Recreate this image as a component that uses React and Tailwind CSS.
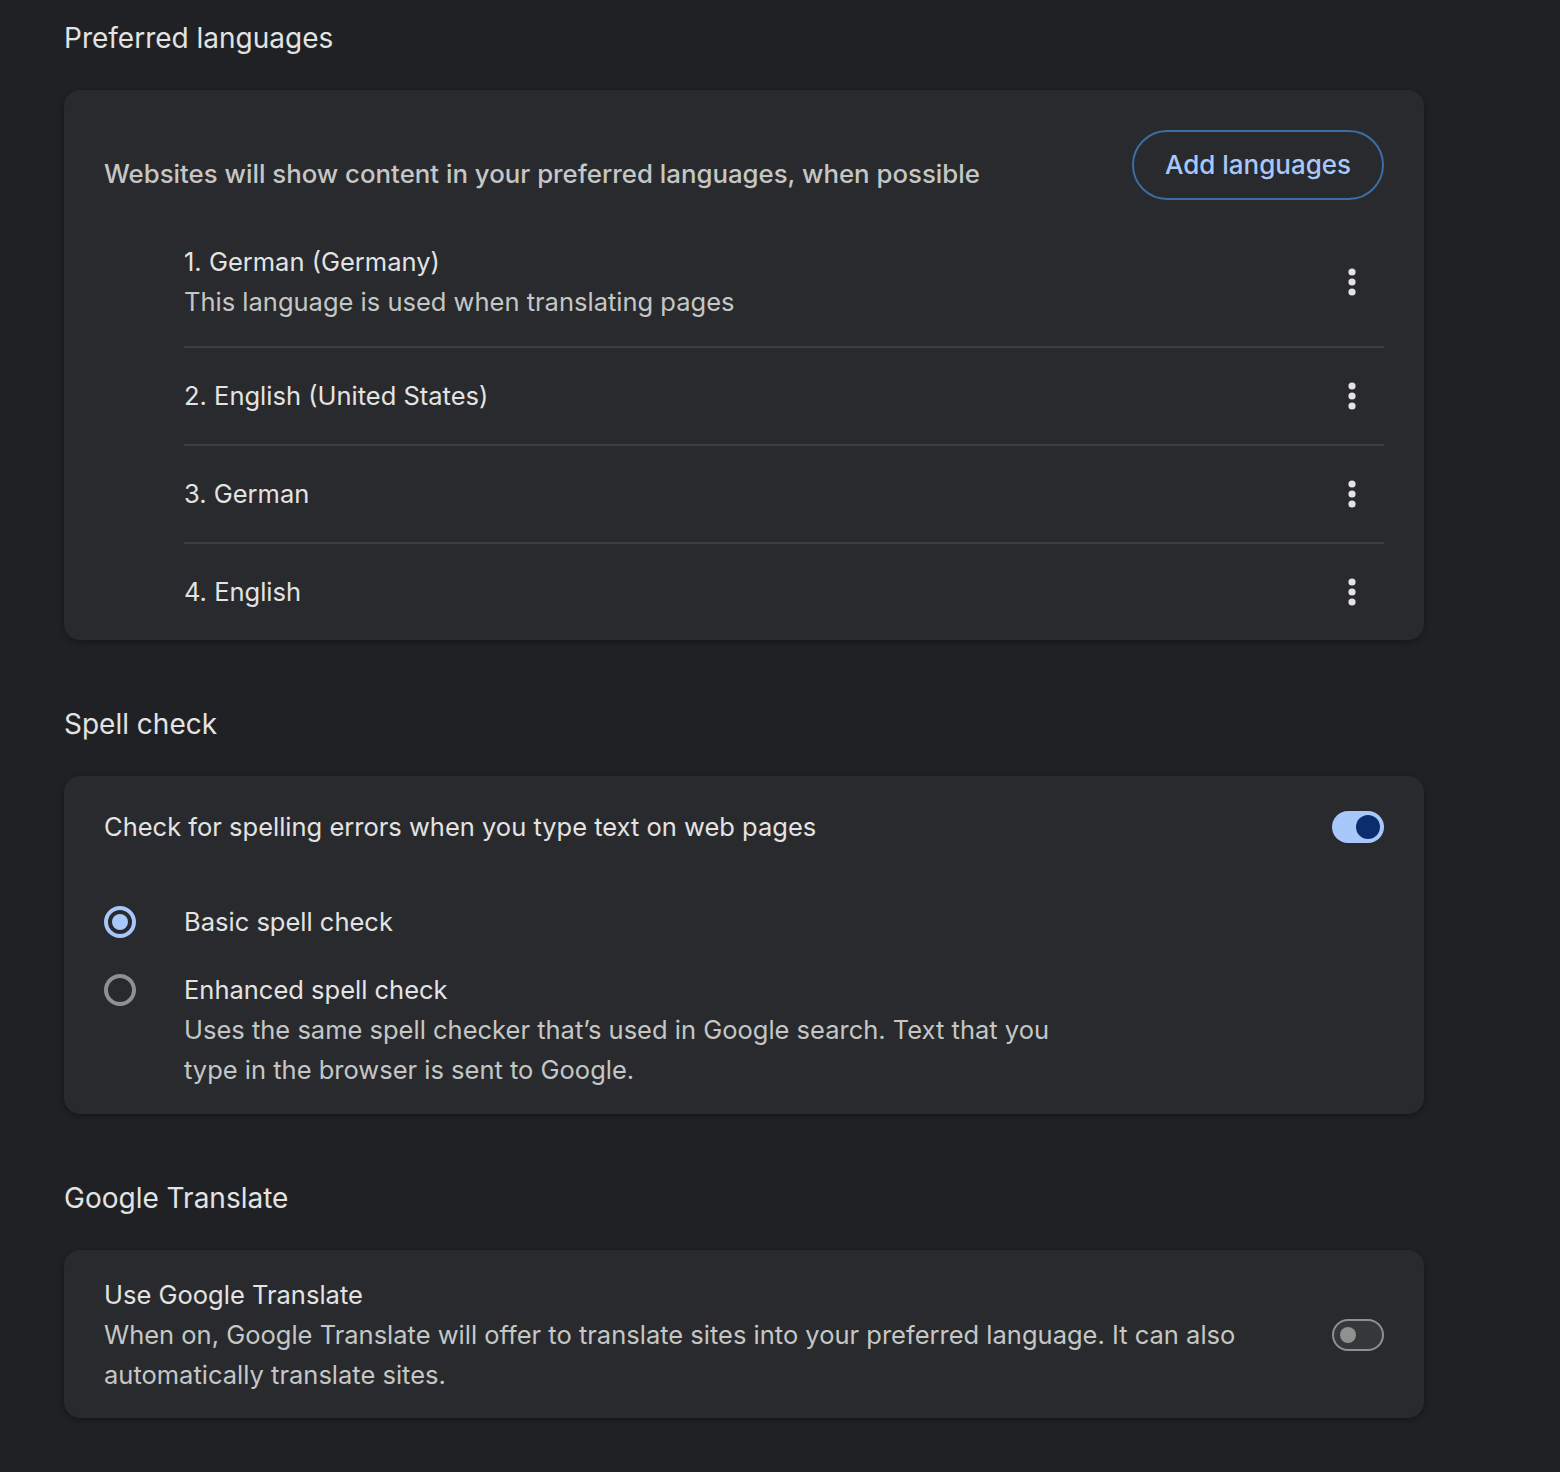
import React, { useState } from "react";

const languages = [
  { name: "1. German (Germany)", note: "This language is used when translating pages" },
  { name: "2. English (United States)" },
  { name: "3. German" },
  { name: "4. English" },
];

const MoreIcon = () => (
  <svg width="8" height="28" viewBox="0 0 8 28" className="fill-[#e3e3e3]">
    <circle cx="4" cy="4" r="3.6" />
    <circle cx="4" cy="14" r="3.6" />
    <circle cx="4" cy="24" r="3.6" />
  </svg>
);

const Toggle = ({ on, onClick }) =>
  on ? (
    <button
      onClick={onClick}
      className="relative flex h-[32px] w-[52px] shrink-0 items-center rounded-full bg-[#a8c7fa]"
    >
      <span className="absolute right-[4px] h-[24px] w-[24px] rounded-full bg-[#0b2d6e]" />
    </button>
  ) : (
    <button
      onClick={onClick}
      className="relative flex h-[32px] w-[52px] shrink-0 items-center rounded-full border-2 border-[#8e918f] bg-[#36373a]"
    >
      <span className="absolute left-[6px] h-[16px] w-[16px] rounded-full bg-[#8e918f]" />
    </button>
  );

const Radio = ({ checked }) =>
  checked ? (
    <span className="flex h-[32px] w-[32px] shrink-0 items-center justify-center rounded-full border-[4px] border-[#a8c7fa]">
      <span className="h-[16px] w-[16px] rounded-full bg-[#a8c7fa]" />
    </span>
  ) : (
    <span className="block h-[32px] w-[32px] shrink-0 rounded-full border-[4px] border-[#8e918f]" />
  );

export default function App() {
  const [spell, setSpell] = useState(true);
  const [translate, setTranslate] = useState(false);
  const [mode, setMode] = useState("basic");

  return (
    <div
      className="min-h-[1472px] bg-[#202124] pl-[64px] pr-[136px] text-[25.5px] leading-[40px] text-[#e3e3e3]"
      style={{ fontFamily: "Inter, 'Noto Sans', sans-serif" }}
    >
      {/* Preferred languages */}
      <h2 className="pt-[18px] pb-[32px] text-[28px] leading-[40px] text-[#e3e3e3]">
        Preferred languages
      </h2>
      <div className="rounded-[16px] bg-[#292a2d] pl-[40px] pr-[40px] shadow-[0_2px_6px_rgba(0,0,0,0.35)]">
        <div className="flex items-end justify-between pt-[40px]">
          <p className="mb-[6px] text-[25.8px] font-medium text-[#c4c7c5]">
            Websites will show content in your preferred languages, when possible
          </p>
          <button className="h-[70px] w-[252px] rounded-full border-2 border-[#3c6ea5] text-[26px] font-medium text-[#a8c7fa]">
            Add languages
          </button>
        </div>
        <div className="pl-[80px]">
          {languages.map((l, i) => (
            <div
              key={l.name}
              className={
                "flex items-center justify-between " +
                (i < languages.length - 1 ? "border-b-2 border-[#3c3d40] " : "") +
                (l.note ? "pt-[42px] pb-[24px]" : i < languages.length - 1 ? "h-[98px]" : "h-[96px]")
              }
            >
              <div>
                <div>{l.name}</div>
                {l.note && <div className="text-[#c4c7c5]">{l.note}</div>}
              </div>
              <div className="mr-[28px]">
                <MoreIcon />
              </div>
            </div>
          ))}
        </div>
      </div>

      {/* Spell check */}
      <h2 className="pt-[64px] pb-[32px] text-[28px] leading-[40px]">Spell check</h2>
      <div className="rounded-[16px] bg-[#292a2d] px-[40px] pb-[24px] shadow-[0_2px_6px_rgba(0,0,0,0.35)]">
        <div className="flex h-[100px] items-center justify-between pt-[2px]">
          <span>Check for spelling errors when you type text on web pages</span>
          <Toggle on={spell} onClick={() => setSpell(!spell)} />
        </div>
        <div
          className="flex h-[92px] cursor-pointer items-center gap-[48px]"
          onClick={() => setMode("basic")}
        >
          <Radio checked={mode === "basic"} />
          <span>Basic spell check</span>
        </div>
        <div
          className="flex cursor-pointer items-start gap-[48px] pt-[2px]"
          onClick={() => setMode("enhanced")}
        >
          <div className="mt-[4px]">
            <Radio checked={mode === "enhanced"} />
          </div>
          <div>
            <div>Enhanced spell check</div>
            <div className="max-w-[900px] text-[#c4c7c5]">
              Uses the same spell checker that’s used in Google search. Text that you
              type in the browser is sent to Google.
            </div>
          </div>
        </div>
      </div>

      {/* Google Translate */}
      <h2 className="pt-[64px] pb-[32px] text-[28px] leading-[40px]">Google Translate</h2>
      <div className="flex items-center justify-between rounded-[16px] bg-[#292a2d] px-[40px] pb-[23px] pt-[25px] shadow-[0_2px_6px_rgba(0,0,0,0.35)]">
        <div className="max-w-[1160px]">
          <div>Use Google Translate</div>
          <div className="text-[#c4c7c5]">
            When on, Google Translate will offer to translate sites into your preferred
            language. It can also automatically translate sites.
          </div>
        </div>
        <Toggle on={translate} onClick={() => setTranslate(!translate)} />
      </div>
    </div>
  );
}
